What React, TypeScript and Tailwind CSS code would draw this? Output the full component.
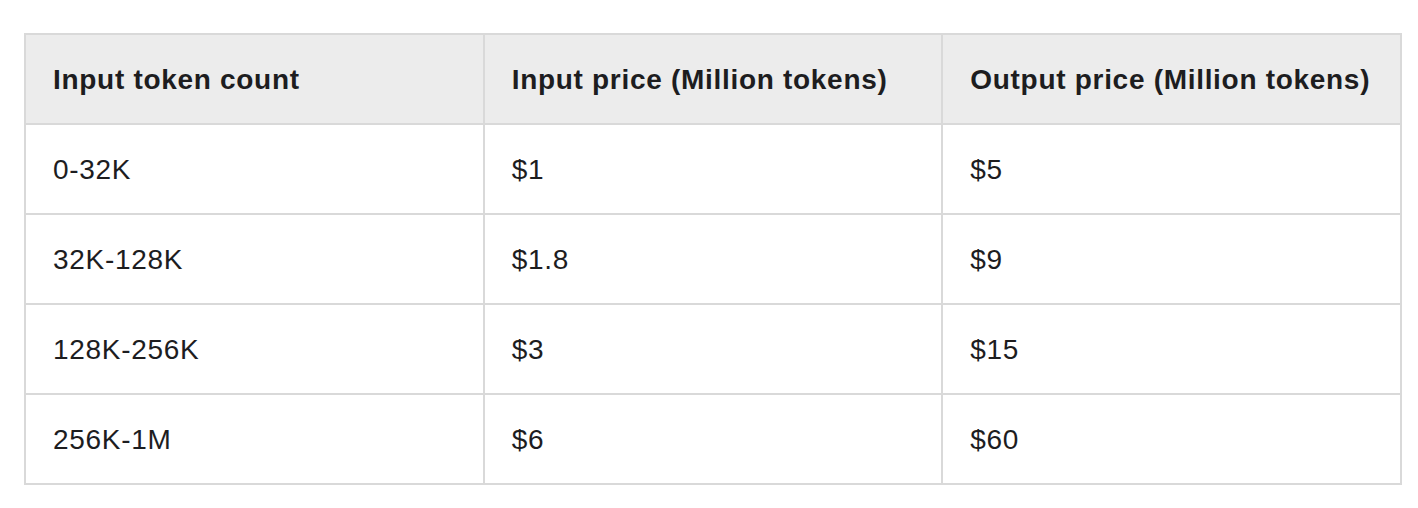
import React from "react";

const rows = [
  ["0-32K", "$1", "$5"],
  ["32K-128K", "$1.8", "$9"],
  ["128K-256K", "$3", "$15"],
  ["256K-1M", "$6", "$60"],
];

export default function App() {
  return (
    <div
      className="min-h-screen bg-white pt-[33px] pl-[24px]"
      style={{ fontFamily: '"Liberation Sans", Arial, sans-serif' }}
    >
      <table className="w-[1378px] table-fixed border-collapse border-2 border-[#d9d9d9] text-[28px] tracking-[0.7px] text-[#1d1d1f]">
        <thead>
          <tr className="h-[90px] bg-[#ececec]">
            <th className="w-1/3 border-2 border-[#d9d9d9] pl-[27px] pt-[2px] text-left font-bold">Input token count</th>
            <th className="w-1/3 border-2 border-[#d9d9d9] pl-[27px] pt-[2px] text-left font-bold">Input price (Million tokens)</th>
            <th className="w-1/3 border-2 border-[#d9d9d9] pl-[27px] pt-[2px] text-left font-bold">Output price (Million tokens)</th>
          </tr>
        </thead>
        <tbody>
          {rows.map((r) => (
            <tr key={r[0]} className="h-[90px]">
              {r.map((c, i) => (
                <td key={i} className="border-2 border-[#d9d9d9] pl-[27px] pt-[2px]">
                  {c}
                </td>
              ))}
            </tr>
          ))}
        </tbody>
      </table>
    </div>
  );
}
